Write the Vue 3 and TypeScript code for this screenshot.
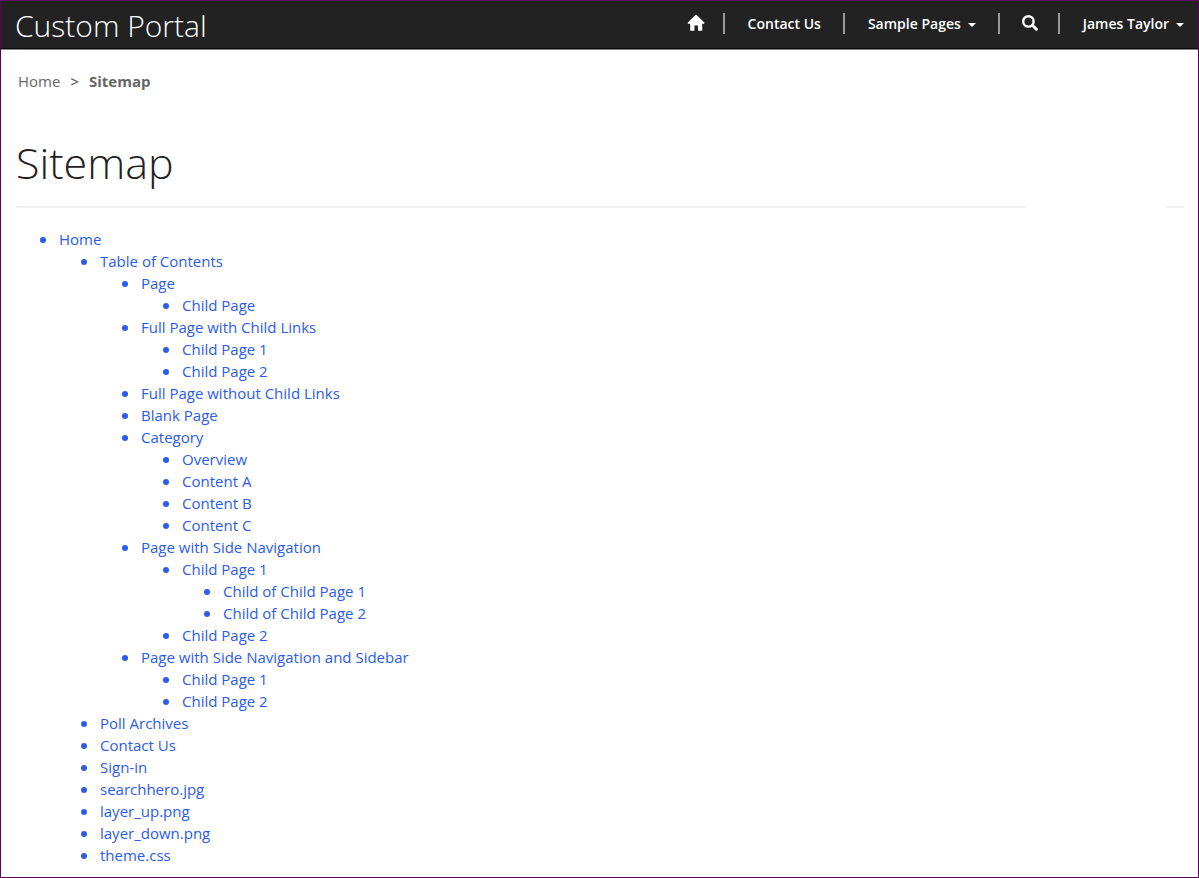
<script setup lang="ts">
import { h, type FunctionalComponent, type VNode } from 'vue'

interface SiteNode {
  title: string
  children?: SiteNode[]
}

const leaves = (...titles: string[]): SiteNode[] => titles.map((title) => ({ title }))

const sitemap: SiteNode[] = [
  {
    title: 'Home',
    children: [
      {
        title: 'Table of Contents',
        children: [
          { title: 'Page', children: leaves('Child Page') },
          { title: 'Full Page with Child Links', children: leaves('Child Page 1', 'Child Page 2') },
          { title: 'Full Page without Child Links' },
          { title: 'Blank Page' },
          { title: 'Category', children: leaves('Overview', 'Content A', 'Content B', 'Content C') },
          {
            title: 'Page with Side Navigation',
            children: [
              { title: 'Child Page 1', children: leaves('Child of Child Page 1', 'Child of Child Page 2') },
              { title: 'Child Page 2' },
            ],
          },
          { title: 'Page with Side Navigation and Sidebar', children: leaves('Child Page 1', 'Child Page 2') },
        ],
      },
      ...leaves('Poll Archives', 'Contact Us', 'Sign-in', 'searchhero.jpg', 'layer_up.png', 'layer_down.png', 'theme.css'),
    ],
  },
]

const renderList = (nodes: SiteNode[]): VNode =>
  h(
    'ul',
    nodes.map((node) =>
      h('li', [h('a', { href: '#' }, node.title), node.children ? renderList(node.children) : null]),
    ),
  )

const SiteTree: FunctionalComponent<{ nodes: SiteNode[] }> = (props) => renderList(props.nodes)
SiteTree.props = ['nodes']
</script>

<template>
  <div class="page">
    <header class="navbar">
      <a class="brand" href="#">Custom Portal</a>
      <nav class="menu" aria-label="Main">
        <a class="item icon-item" href="#" aria-label="Home">
          <svg width="18" height="18" viewBox="0 0 18 18" aria-hidden="true">
            <path d="M9 .4 17.6 8.8 17 9.8H15.2V16.8H11V11.6H7.4V16.8H3.2V9.8H1L.6 8.8Z" fill="#fff" />
          </svg>
        </a>
        <a class="item" href="#">Contact Us</a>
        <button class="item" type="button" aria-haspopup="true">Sample Pages<span class="caret"></span></button>
        <button class="item icon-item" type="button" aria-label="Search">
          <svg width="16" height="18" viewBox="0 0 16 18" aria-hidden="true">
            <circle cx="6.4" cy="7.4" r="5.2" fill="none" stroke="#fff" stroke-width="2.4" />
            <path d="M10.4 11.2 14.4 15.2" stroke="#fff" stroke-width="3" stroke-linecap="round" />
          </svg>
        </button>
        <button class="item" type="button" aria-haspopup="true">James Taylor<span class="caret"></span></button>
      </nav>
    </header>

    <main class="content">
      <nav class="crumbs" aria-label="Breadcrumb">
        <a href="#">Home</a>
        <span class="arrow">&gt;</span>
        <strong>Sitemap</strong>
      </nav>
      <h1>Sitemap</h1>
      <div class="rule">
        <hr class="rule-long" />
        <hr class="rule-short" />
      </div>
      <div class="tree">
        <SiteTree :nodes="sitemap" />
      </div>
    </main>
  </div>
</template>

<style>
body {
  margin: 0;
  background: #fff;
}
</style>

<style scoped>
.page {
  box-sizing: border-box;
  min-height: 100vh;
  border: 1px solid #5c005c;
  background: #fff;
  color: #222;
  font-family: 'Segoe UI', 'Open Sans', 'Noto Sans', sans-serif;
  font-size: 15px;
  line-height: 22px;
}

a {
  color: inherit;
  text-decoration: none;
}

.navbar {
  display: flex;
  align-items: center;
  justify-content: space-between;
  box-sizing: border-box;
  height: 48px;
  padding: 0 14px;
  border-bottom: 1px solid #080808;
  box-shadow: 0 1px 0 #888;
  background: #222;
  color: #fff;
}

.brand {
  padding-top: 2px;
  font-size: 30px;
  font-weight: 300;
  line-height: 45px;
}

.menu {
  display: flex;
  align-items: center;
  padding-bottom: 2px;
}

.item {
  display: flex;
  align-items: center;
  box-sizing: border-box;
  height: 21px;
  margin: 0;
  padding: 0 22px 0 23px;
  border: 0;
  border-right: 2px solid #999;
  background: none;
  color: #fff;
  font: inherit;
  font-size: 14px;
  font-weight: 600;
  white-space: nowrap;
}

.item:last-child {
  padding-right: 0;
  border-right: 0;
}

.icon-item {
  padding: 0 20px 0 22px;
}

.item:first-child {
  padding-right: 18px;
}

.icon-item svg {
  display: block;
  margin-bottom: 2px;
}

.caret {
  margin: 2px 0 0 7px;
  border-top: 4px solid #fff;
  border-right: 4px solid transparent;
  border-left: 4px solid transparent;
}

.content {
  padding: 21px 14px 8px 15px;
}

.crumbs {
  display: flex;
  gap: 10px;
  padding: 0 2px;
  color: #666;
}

.arrow {
  font-weight: 600;
}

h1 {
  margin: 39px 0 11px;
  font-size: 43px;
  font-weight: 300;
  line-height: 64px;
}

.rule {
  display: flex;
  gap: 140px;
}

.rule hr {
  height: 2px;
  margin: 0;
  border: 0;
  background: #f0f0f0;
}

.rule-long {
  flex: 1;
}

.rule-short {
  width: 18px;
}

.tree {
  margin-top: 20px;
  padding-left: 2px;
  color: #2b5ceb;
}

.tree :deep(ul) {
  margin: 0;
  padding-left: 41px;
  list-style: none;
}

.tree :deep(li)::before {
  content: '';
  display: inline-block;
  width: 6px;
  height: 6px;
  margin: 0 13px 2px -19px;
  border-radius: 50%;
  background: #2b5ceb;
  vertical-align: middle;
}

.tree :deep(a) {
  color: inherit;
  text-decoration: none;
}
</style>
